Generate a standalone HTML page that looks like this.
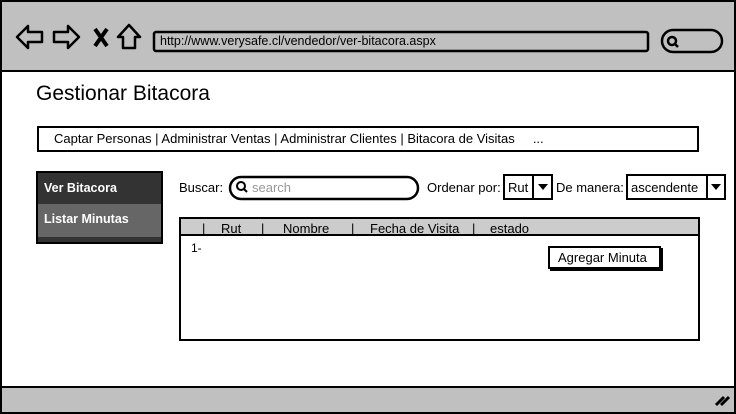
<!DOCTYPE html>
<html><head><meta charset="utf-8"><style>
*{margin:0;padding:0;box-sizing:border-box}
body{width:736px;height:414px;position:relative;background:#fff;font-family:"Liberation Sans",sans-serif;color:#000;overflow:hidden}
.a{position:absolute}
.t{font-size:13px;white-space:nowrap}
</style></head><body>
<div class="a" style="left:0;top:0;width:736px;height:414px;border:2px solid #000"></div>
<div class="a" style="left:2px;top:2px;width:732px;height:70px;background:#c0c0c0;border-bottom:2px solid #000"></div>
<div class="a" style="left:2px;top:386px;width:732px;height:26px;background:#c0c0c0;border-top:2px solid #000"></div>
<svg class="a" style="left:0;top:0" width="736" height="414">
<g fill="none" stroke="#000" stroke-width="2.5" stroke-linejoin="round">
<path d="M17 37 L28 26 L28 32 L42 32 L42 42 L28 42 L28 48 Z"/>
<path d="M79 37 L68 26 L68 32 L54 32 L54 42 L68 42 L68 48 Z"/>
<path d="M129 25 L140 37 L135 37 L135 48 L123 48 L123 37 L118 37 Z"/>
<path d="M95 29 L107 46 M107 29 L95 46" stroke-width="4"/>
<rect x="154" y="32" width="494" height="19" rx="2"/>
<rect x="662" y="30" width="60" height="22" rx="11"/>
<circle cx="672" cy="41" r="4"/><path d="M675 44 L678 47"/>
<path d="M716 405 L724 397 M721 405 L729 397" stroke-width="3"/>
<rect x="230" y="177" width="188" height="22" rx="11"/>
<circle cx="241" cy="186" r="4" stroke-width="2"/><path d="M244 189 L247 192" stroke-width="2"/>
</g></svg>
<div class="a t" style="left:160px;top:34px;font-size:12.5px">http://www.verysafe.cl/vendedor/ver-bitacora.aspx</div>
<div class="a" style="left:36px;top:82px;font-size:21px">Gestionar Bitacora</div>
<div class="a" style="left:37px;top:126px;width:662px;height:26px;border:2px solid #000"></div>
<div class="a t" style="left:54px;top:131px">Captar Personas | Administrar Ventas | Administrar Clientes | Bitacora de Visitas &nbsp;&nbsp;&nbsp;&nbsp;...</div>
<div class="a" style="left:36px;top:171px;width:127px;height:73px;background:#333;border:2px solid #000"></div>
<div class="a" style="left:38px;top:204px;width:123px;height:33px;background:#666"></div>
<div class="a t" style="left:44px;top:181px;color:#fff;font-weight:bold;font-size:12.5px">Ver Bitacora</div>
<div class="a t" style="left:44px;top:212px;color:#fff;font-weight:bold;font-size:12.5px">Listar Minutas</div>
<div class="a t" style="left:179px;top:180px">Buscar:</div>
<div class="a t" style="left:252px;top:180px;color:#999">search</div>
<div class="a t" style="left:427px;top:180px">Ordenar por:</div>
<div class="a" style="left:503px;top:174px;width:50px;height:26px;border:2px solid #000"></div>
<div class="a" style="left:532px;top:174px;width:2px;height:26px;background:#000"></div>
<div class="a t" style="left:508px;top:180px">Rut</div>
<div class="a" style="left:538px;top:184px;border-left:5px solid transparent;border-right:5px solid transparent;border-top:6px solid #000"></div>
<div class="a t" style="left:556px;top:180px">De manera:</div>
<div class="a" style="left:626px;top:174px;width:100px;height:26px;border:2px solid #000"></div>
<div class="a" style="left:706px;top:174px;width:2px;height:26px;background:#000"></div>
<div class="a t" style="left:631px;top:180px">ascendente</div>
<div class="a" style="left:711px;top:184px;border-left:5px solid transparent;border-right:5px solid transparent;border-top:6px solid #000"></div>
<div class="a" style="left:179px;top:217px;width:521px;height:124px;border:2px solid #000"></div>
<div class="a" style="left:181px;top:219px;width:517px;height:17px;background:#ccc;border-bottom:2px solid #000"></div>
<div class="a t" style="left:202px;top:221px">|</div>
<div class="a t" style="left:221px;top:221px">Rut</div>
<div class="a t" style="left:261px;top:221px">|</div>
<div class="a t" style="left:283px;top:221px">Nombre</div>
<div class="a t" style="left:351px;top:221px">|</div>
<div class="a t" style="left:370px;top:221px">Fecha de Visita</div>
<div class="a t" style="left:472px;top:221px">|</div>
<div class="a t" style="left:490px;top:221px">estado</div>
<div class="a t" style="left:191px;top:241px;font-size:12px">1-</div>
<div class="a" style="left:548px;top:246px;width:113px;height:23px;border:2px solid #000;box-shadow:2px 2px 0 #000;background:#fff"></div>
<div class="a t" style="left:558px;top:250px">Agregar Minuta</div>
</body></html>
